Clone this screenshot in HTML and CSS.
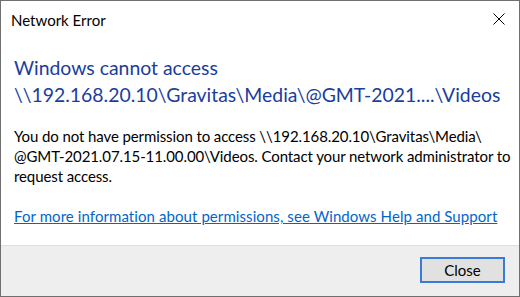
FILE: index.html
```html
<!DOCTYPE html>
<html>
<head>
<meta charset="utf-8">
<link rel="stylesheet" href="styles.css">
</head>
<body>
<div class="window">
  <div class="titlebar">
    <span class="title">Network Error</span>
    <svg class="close-x" width="12" height="12" viewBox="0 0 12 12"><path d="M0.5 0.5 L11.5 11.5 M11.5 0.5 L0.5 11.5" stroke="#000" stroke-width="1" fill="none"/></svg>
  </div>
  <div class="content">
    <h1 class="heading">Windows cannot access<br>\\192.168.20.10\Gravitas\Media\@GMT-2021....\Videos</h1>
    <p class="message">You do not have permission to access \\192.168.20.10\Gravitas\Media\<br>@GMT-2021.07.15-11.00.00\Videos. Contact your network administrator to<br>request access.</p>
    <a class="help-link" href="#">For more information about permissions, see Windows Help and Support</a>
  </div>
  <div class="footer">
    <button class="btn-close">Close</button>
  </div>
</div>
</body>
</html>
```

FILE: styles.css
```css
html, body {
  margin: 0;
  padding: 0;
  background: #ffffff;
}
.window {
  width: 520px;
  height: 297px;
  box-sizing: border-box;
  border: 1px solid #6f6f6f;
  display: flex;
  flex-direction: column;
  font-family: "Lato", "Noto Sans", sans-serif;
  color: #000;
  background: #fff;
  overflow: hidden;
}
.titlebar {
  display: flex;
  justify-content: space-between;
  align-items: flex-start;
  padding: 9px 14px 0 10px;
  height: 20px;
  flex: none;
}
.title {
  font-size: 15px;
  line-height: 20px;
  white-space: nowrap;
}
.close-x {
  margin-top: 3px;
  display: block;
}
.content {
  flex: 1;
  padding: 24px 13px 0 13px;
  white-space: nowrap;
}
.heading {
  margin: 0;
  font-weight: normal;
  font-size: 19.4px;
  line-height: 27px;
  color: #1a3d9e;
}
.message {
  margin: 18px 0 20px 0;
  font-size: 15px;
  line-height: 20px;
  letter-spacing: -0.1px;
}
.help-link {
  display: block;
  font-size: 15px;
  line-height: 20px;
  letter-spacing: 0.08px;
  color: #0066cc;
  text-decoration: underline;
}
.footer {
  height: 51px;
  flex: none;
  border-top: 1px solid #dfdfdf;
  background: #eeeeee;
  display: flex;
  justify-content: flex-end;
  align-items: flex-start;
  padding: 11px 14px 0 0;
  box-sizing: border-box;
}
.btn-close {
  width: 85px;
  height: 26px;
  box-sizing: border-box;
  border: 2px solid #3a7bd5;
  background: #e1e1e1;
  font-family: "Lato", "Noto Sans", sans-serif;
  font-size: 15px;
  line-height: 20px;
  color: #000;
  padding: 0;
  margin: 0;
}
```
